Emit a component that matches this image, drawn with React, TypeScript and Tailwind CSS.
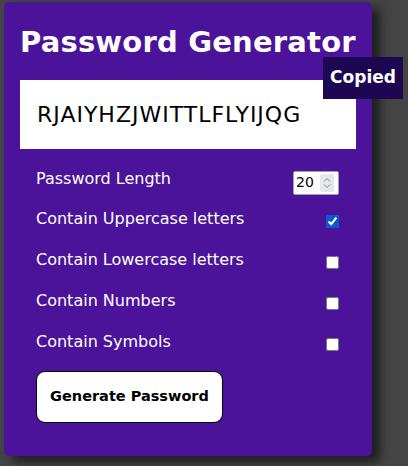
import { useState } from 'react';

const options = [
  { id: 'upper', label: 'Contain Uppercase letters', checked: true },
  { id: 'lower', label: 'Contain Lowercase letters', checked: false },
  { id: 'numbers', label: 'Contain Numbers', checked: false },
  { id: 'symbols', label: 'Contain Symbols', checked: false },
];

export default function App() {
  const [length, setLength] = useState(20);
  const [checks, setChecks] = useState(options.map((o) => o.checked));

  return (
    <div className="min-h-[466px] bg-[#444444] pt-[2px] pl-[4px]" style={{ fontFamily: '"DejaVu Sans", "Liberation Sans", sans-serif' }}>
      <div className="relative w-[368px] h-[454px] bg-[#4a1399] rounded-[5px] shadow-[8px_6px_10px_rgba(0,0,0,0.55)] px-[16px] pt-[22px]">
        <h1 className="text-[29px] font-bold text-white leading-[36px] tracking-[0.2px] whitespace-nowrap">Password Generator</h1>
        <div className="mt-[20px] h-[69px] bg-white flex items-center pl-[17px] text-[22px] text-black tracking-[1px]">
          RJAIYHZJWITTLFLYIJQG
        </div>
        <div className="absolute right-[-31px] top-[55px] w-[80px] bg-[#1d0753] text-white font-bold text-[17px] h-[42px] flex items-center justify-center">
          Copied
        </div>

        <div className="mt-[10px] pl-[16px] pr-[16px] text-white text-[16px]">
          <div className="flex items-center justify-between h-[39px]">
            <span>Password Length</span>
            <div className="flex items-center w-[46px] h-[24px] bg-white border border-gray-400 rounded-[2px] mr-[1px] mt-[8px]">
              <input
                type="number"
                value={length}
                onChange={(e) => setLength(Number(e.target.value))}
                className="w-[26px] pl-[2px] text-[14px] text-black bg-transparent outline-none [appearance:textfield] [&::-webkit-inner-spin-button]:appearance-none"
              />
              <div className="w-[14px] h-[18px] bg-gray-200 rounded-[2px] flex flex-col items-center justify-center">
                <svg width="8" height="12" viewBox="0 0 8 12" fill="none" stroke="#8a8a8a" strokeWidth="1">
                  <path d="M1 4.5 L4 1.5 L7 4.5" />
                  <path d="M1 7.5 L4 10.5 L7 7.5" />
                </svg>
              </div>
            </div>
          </div>
          {options.map((o, i) => (
            <div key={o.id} className="flex items-center justify-between h-[41px]">
              <span>{o.label}</span>
              <input
                type="checkbox"
                checked={checks[i]}
                onChange={() => setChecks(checks.map((c, j) => (j === i ? !c : c)))}
                className="w-[13px] h-[13px] mr-[1px] mt-[5px] accent-[#0b57d0]"
              />
            </div>
          ))}
        </div>

        <button className="ml-[16px] mt-[9px] w-[187px] h-[52px] bg-white text-black font-bold text-[14.5px] rounded-[9px] border border-black">
          Generate Password
        </button>
      </div>
    </div>
  );
}
